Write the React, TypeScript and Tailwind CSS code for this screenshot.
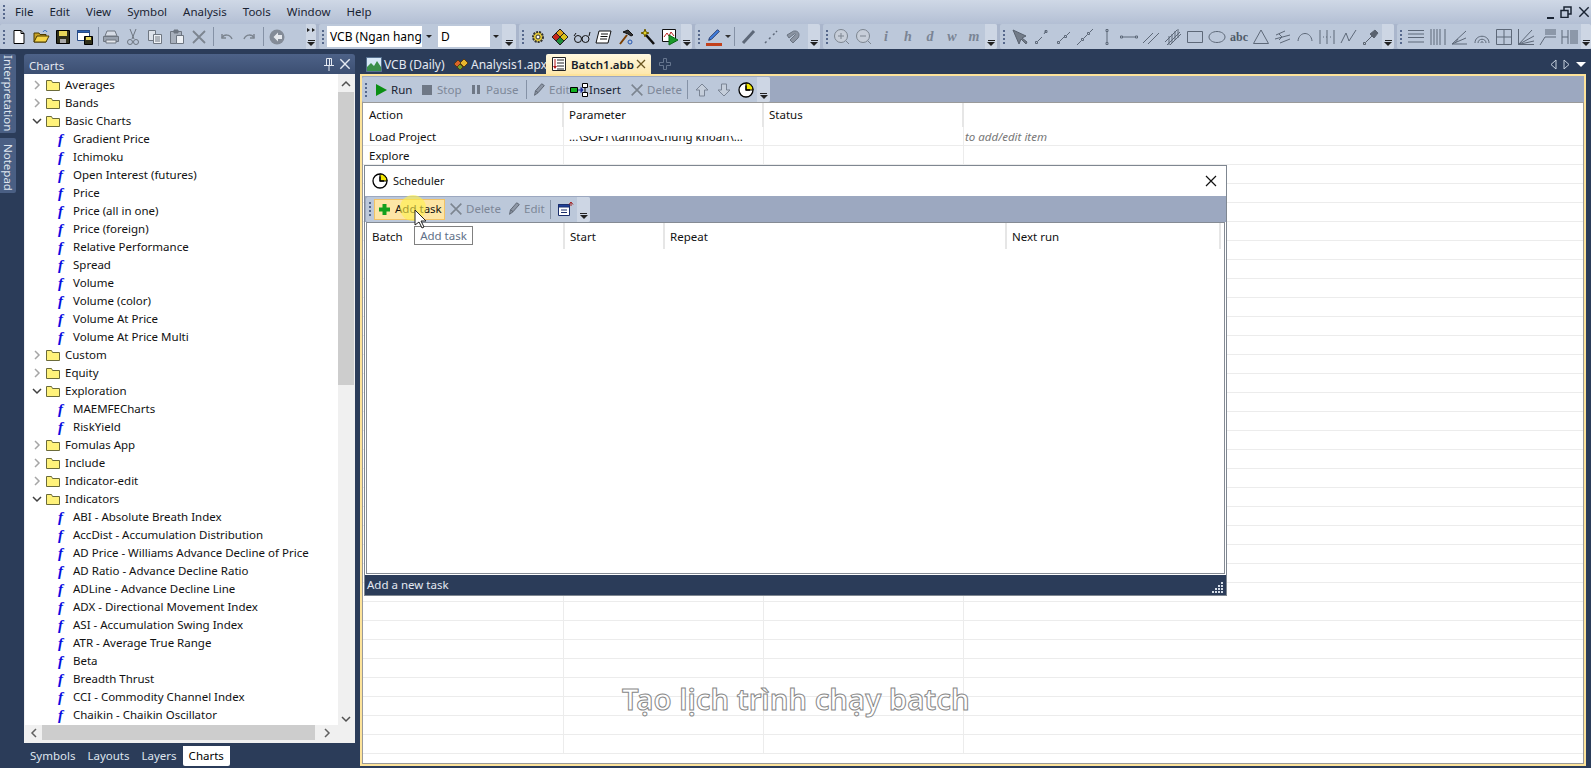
import { FC, ReactNode } from 'react';

const Svg: FC<{ children: ReactNode; size?: number; stroke?: string }> = ({ children, size = 18, stroke = '#5d6878' }) => (
  <svg width={size} height={size} viewBox="0 0 18 18" fill="none" stroke={stroke} strokeWidth="1">
    {children}
  </svg>
);

const Grip = () => (
  <div className="flex w-[8px] shrink-0 flex-col items-center gap-[2px]">
    {[0, 1, 2, 3].map(i => (
      <div key={i} className="h-[2px] w-[2px] bg-[#56688c]" />
    ))}
  </div>
);

const More = ({ w = 14, double }: { w?: number; double?: boolean }) => (
  <div className="flex h-full shrink-0 flex-col items-center bg-[#cdd6e4] pb-[3px]" style={{ width: w }}>
    {double && (
      <div className="mt-[4px] flex gap-[2px]">
        <div className="h-0 w-0 border-y-[2px] border-l-[3px] border-y-transparent border-l-[#222]" />
        <div className="h-0 w-0 border-y-[2px] border-l-[3px] border-y-transparent border-l-[#222]" />
      </div>
    )}
    <div className="flex-1" />
    <div className="mb-[1px] h-px w-[7px] bg-[#222]" />
    <div className="h-0 w-0 border-x-[4px] border-t-[4px] border-x-transparent border-t-[#222]" />
  </div>
);

const Slot: FC<{ children?: ReactNode }> = ({ children }) => (
  <div className="flex h-full w-[22px] shrink-0 items-center justify-center">{children}</div>
);

const Sep = ({ w = 4 }: { w?: number }) => (
  <div className="flex h-full shrink-0 items-center justify-center" style={{ width: w }}>
    <div className="h-[19px] w-px bg-[#8592a6]" />
  </div>
);

const Band: FC<{ w: number; children: ReactNode }> = ({ w, children }) => (
  <div className="flex h-[25px] shrink-0 items-center overflow-hidden rounded-[2px] bg-[#bcc8da]" style={{ width: w }}>
    {children}
  </div>
);

const Fill = () => <div className="min-w-0 flex-1" />;

/* colored toolbar icons */
const IconNew = () => (
  <Svg stroke="#000"><path d="M4 2.5h7l3 3v10H4z" fill="#fff" /><path d="M11 2.5v3h3" /></Svg>
);
const IconOpen = () => (
  <Svg stroke="#4a3a00"><path d="M2 14V5h5l1 1.500h6V14z" fill="#c9a227" /><path d="M2 14l3-6h12l-3 6z" fill="#f5d547" /><path d="M11 4c1-2 3-2 4 0" stroke="#1a5fb4" /></Svg>
);
const IconSave = () => (
  <Svg stroke="#000"><path d="M2.500 2.500h13v13h-13z" fill="#2f2f1a" /><path d="M5 3h8v5H5z" fill="#e7d65a" stroke="none" /><path d="M6 11h6v4H6z" fill="#a9a9a9" stroke="none" /></Svg>
);
const IconSaveAs = () => (
  <Svg stroke="#274b86"><path d="M1.500 2.500h12v10h-12z" fill="#fff" /><path d="M1.500 2.500h12v2h-12z" fill="#2e62b0" /><path d="M8.500 8.500h8v8h-8z" fill="#2f2f1a" stroke="#000" /><path d="M10 9h5v3h-5z" fill="#e7d65a" stroke="none" /></Svg>
);
const IconPrint = () => (
  <Svg stroke="#6e7681"><path d="M5 3h8l2 5H3z" fill="#d6dce6" /><path d="M1.500 8.500h15v5h-15z" fill="#98a1ae" /><path d="M4 12h10v3H4z" fill="#e4e7ec" /></Svg>
);
const IconCut = () => (
  <Svg stroke="#6e7681"><path d="M6 1l4 10M12 1L8 11" /><circle cx="6" cy="14" r="2.500" /><circle cx="12" cy="14" r="2.500" /></Svg>
);
const IconCopy = () => (
  <Svg stroke="#6e7681"><path d="M2.500 2.500h7v10h-7z" fill="#dde2ea" /><path d="M7.500 6.500h8v9h-8z" fill="#eef1f5" /><path d="M9 9h5M9 11h5M9 13h5" /></Svg>
);
const IconPaste = () => (
  <Svg stroke="#6e7681"><path d="M2.500 3.500h11v12h-11z" fill="#a8b0bc" /><path d="M6 2h4v3H6z" fill="#6e7681" /><path d="M8.500 7.500h7v8h-7z" fill="#eef1f5" /></Svg>
);
const IconX = ({ stroke = '#7c8590', size = 18 }: { stroke?: string; size?: number }) => (
  <Svg stroke={stroke} size={size}><path d="M3 3l12 12M15 3L3 15" strokeWidth="1.800" /></Svg>
);
const IconUndo = () => (
  <Svg stroke="#7c8590"><path d="M4 6v4h4" strokeWidth="1.500" /><path d="M4 10c2-4 8-4 10 1" strokeWidth="1.500" /></Svg>
);
const IconRedo = () => (
  <Svg stroke="#7c8590"><path d="M14 6v4h-4" strokeWidth="1.500" /><path d="M14 10c-2-4-8-4-10 1" strokeWidth="1.500" /></Svg>
);
const IconBack = () => (
  <Svg stroke="none"><circle cx="9" cy="9" r="7.500" fill="#838b97" /><path d="M10 4.500L5.500 9l4.500 4.500V11h4V7h-4z" fill="#e6e9ee" /></Svg>
);
const IconGear = () => (
  <Svg stroke="#333"><circle cx="9" cy="9" r="5" fill="#e3c93a" strokeDasharray="2 1" strokeWidth="2" /><circle cx="9" cy="9" r="2" fill="#fff" /></Svg>
);
const IconDiamonds = () => (
  <Svg stroke="#222">
    <path d="M5 5l4-4 4 4-4 4z" fill="#e2a317" /><path d="M1 9l4-4 4 4-4 4z" fill="#c2261c" /><path d="M9 9l4-4 4 4-4 4z" fill="#d9c21b" /><path d="M5 13l4-4 4 4-4 4z" fill="#1f8a3a" />
  </Svg>
);
const IconGlasses = () => (
  <Svg stroke="#111"><circle cx="5" cy="11" r="3.500" /><circle cx="12.500" cy="11" r="3.500" /><path d="M8.500 10h.5M1 8l2-3M16 8l1-4" /></Svg>
);
const IconBook = () => (
  <Svg stroke="#111"><path d="M4 3h12l-3 12H1z" fill="#fff" /><path d="M6 6h7M5.500 8.500h7M5 11h7" /></Svg>
);
const IconHammer = () => (
  <Svg stroke="#111"><path d="M3 16L10 7" strokeWidth="2" stroke="#7b3f00" /><path d="M6 4l5-2 5 5-2 1-3-2z" fill="#333" /><circle cx="13" cy="14" r="2" stroke="#2456b0" /></Svg>
);
const IconWand = () => (
  <Svg stroke="#111"><path d="M7 7l8 9" strokeWidth="2.500" /><path d="M6 1l1 3 3 1-3 1-1 3-1-3-3-1 3-1z" fill="#e3d32a" stroke="#6a5a00" /></Svg>
);
const IconRunChart = () => (
  <Svg stroke="#111"><path d="M1.500 1.500h13v12h-13z" fill="#fff" /><path d="M3 9l3-4 2 3 2-4 3 4" stroke="#b22" /><path d="M8 7l9 5-9 5z" fill="#1a9a2a" stroke="#0c6a18" /></Svg>
);
const IconPen = () => (
  <div className="flex flex-col items-center">
    <Svg size={16} stroke="#1c2f63"><path d="M4 12l9-9 2 2-9 9-3 1z" fill="#3f7fe0" /></Svg>
    <div className="h-[3px] w-[16px] bg-[#c2411c]" />
  </div>
);

const Tool: FC<{ d: string; sw?: number }> = ({ d, sw = 1 }) => (
  <Svg stroke="#5d6878"><path d={d} strokeWidth={sw} /></Svg>
);

const drawTools = [
  'M3.500 13.500h2v2h-2zM6 13l4-4M12 6l2-3M13 2.500h2v2h-2z',
  'M3.500 13.500h2v2h-2zM6 13l4-4M10.500 7.500h2v2h-2zM13 7l3-3',
  'M1 17l4-4M5.500 10.500h2v2h-2zM8 10l3-3M11.500 4.500h2v2h-2zM14 4l3-3',
  'M8 1.500h2v2H8zM9 3.500v11M8 14.500h2v2H8z',
  'M0.500 8h2v2h-2zM2.500 9h13M15.500 8h2v2h-2z',
  'M1 15L11 5M6 16L17 5',
  'M1 14L13 2M3 17L16 4M6 17l11-11M5 8v9M8 6v9M11 3v9M14 1v9',
  'M1.500 3.500h15v11h-15z',
  'M9 3.500c4.500 0 8 2.500 8 5.500s-3.500 5.500-8 5.500S1 12 1 9s3.500-5.500 8-5.500z',
];
const drawTools2 = [
  'M9 2L1.500 15.500h15z',
  'M2 7l9-4M1 11l15-4M6 15l10-4M5 6l3 3-3 3',
  'M2 13c1-10 13-10 14 0',
  'M2 2v14M16 2v14M5 9h1M8 9h1M12 9h1M9 2v14',
  'M1 15L6 5l3 8 7-11',
];
const fanTools = [
  'M1 2.500h16M1 6h16M1 9.500h16M1 14h16',
  'M2 1v16M5 1v16M8 1v16M11 1v16M16 1v16',
  'M1 16L15 3M1 16l14-6M1 16h15M4 15l3-4',
  'M2 15c0-9 14-9 14 0M5 15c0-5 8-5 8 0M8 15c0-2 2-2 2 0',
  'M1.500 1.500h15v15h-15zM1.500 9h15M9 1.500v15',
  'M1.500 1v15.500H17M1.500 16.500L15 2M1.500 16.500L17 8M1.500 16.500L17 13',
  'M1 17l5-8h11M6 2h11M6 4h11M6 6h11',
  'M1 2v14M7 2v14M1 9h6M10 2v14M12 2v14M14 2v14M16 2v14',
];

const ScaledLetter: FC<{ c: string }> = ({ c }) => (
  <span className="font-['Liberation_Serif',serif] text-[14px] font-bold italic text-[#7a8494]">{c}</span>
);

const ToolBar = () => (
  <div className="flex h-[25px] items-center gap-[3px] bg-[#aab6cc]">
    <Band w={316}>
      <Grip />
      <Slot><IconNew /></Slot><Slot><IconOpen /></Slot><Slot><IconSave /></Slot><Slot><IconSaveAs /></Slot>
      <Sep />
      <Slot><IconPrint /></Slot><Slot><IconCut /></Slot><Slot><IconCopy /></Slot><Slot><IconPaste /></Slot><Slot><IconX /></Slot>
      <Sep w={6} />
      <Slot><IconUndo /></Slot><Slot><IconRedo /></Slot>
      <Sep w={6} />
      <Slot><IconBack /></Slot>
      <Fill />
      <More w={10} double />
    </Band>
    <Band w={197}>
      <Grip />
      <div className="flex h-[21px] w-[109px] shrink-0 items-center bg-white pl-[3px] text-[12px] text-black">
        <span className="flex-1 whitespace-nowrap">VCB (Ngan hang</span>
        <div className="flex h-full w-[14px] shrink-0 items-center justify-center bg-[#bcc8da]">
          <div className="h-0 w-0 border-x-[3px] border-t-[3px] border-x-transparent border-t-[#222]" />
        </div>
      </div>
      <div className="ml-[2px] flex h-[21px] w-[64px] shrink-0 items-center bg-white pl-[3px] text-[12px] text-black">
        <span className="flex-1">D</span>
        <div className="flex h-full w-[12px] shrink-0 items-center justify-center bg-[#bcc8da]">
          <div className="h-0 w-0 border-x-[3px] border-t-[3px] border-x-transparent border-t-[#222]" />
        </div>
      </div>
      <Fill />
      <More />
    </Band>
    <Band w={173}>
      <Grip />
      <Slot><IconGear /></Slot><Slot><IconDiamonds /></Slot><Slot><IconGlasses /></Slot><Slot><IconBook /></Slot><Slot><IconHammer /></Slot><Slot><IconWand /></Slot><Slot><IconRunChart /></Slot>
      <Fill />
      <More w={11} />
    </Band>
    <Band w={125}>
      <Grip />
      <Slot><IconPen /></Slot>
      <div className="h-0 w-0 shrink-0 border-x-[3px] border-t-[3px] border-x-transparent border-t-[#333]" />
      <Sep w={7} />
      <Slot><Tool d="M3 15L14 3" sw={3} /></Slot>
      <Slot><Tool d="M3 15l1.500-1.500M7 11l1.500-1.500M11 7l1.500-1.500M14 4l1-1" sw={1.500} /></Slot>
      <Slot><Svg stroke="#6a7482"><path d="M11 3c4 0 5 4 3 7l-5 5-3-3 5-5c1-1 0-2-1-1l-5 4-2-3 5-3c1-1 2-1 3-1z" fill="#8b94a2" /></Svg></Slot>
      <Fill />
      <More w={12} />
    </Band>
    <Band w={174}>
      <Grip />
      <Slot><Svg stroke="#7c8590"><circle cx="8" cy="8" r="6.500" fill="#c7ced9" /><path d="M5 8h6M8 5v6M13 13l3 3" /></Svg></Slot>
      <Slot><Svg stroke="#7c8590"><circle cx="8" cy="8" r="6.500" fill="#c7ced9" /><path d="M5 8h6M13 13l3 3" /></Svg></Slot>
      <Slot><ScaledLetter c="i" /></Slot><Slot><ScaledLetter c="h" /></Slot><Slot><ScaledLetter c="d" /></Slot><Slot><ScaledLetter c="w" /></Slot><Slot><ScaledLetter c="m" /></Slot>
      <Fill />
      <More w={12} />
    </Band>
    <Band w={394}>
      <Grip />
      <Slot><Svg stroke="#59626f"><path d="M3 2l6 14 2-5 5 5 1-2-5-4 4-2z" fill="#737c89" /></Svg></Slot>
      {drawTools.map(d => <Slot key={d}><Tool d={d} /></Slot>)}
      <Slot><span className="font-['Liberation_Serif',serif] text-[12px] font-bold leading-none text-[#4f5a68]">abc</span></Slot>
      {drawTools2.map(d => <Slot key={d}><Tool d={d} /></Slot>)}
      <Slot><Svg stroke="#59626f"><path d="M1.500 14.500h2v2h-2zM4 14l6-6" /><path d="M8 6l5-4 3 3-4 5z" fill="#59626f" /></Svg></Slot>
      <Fill />
      <More w={12} />
    </Band>
    <Band w={194}>
      <Grip />
      {fanTools.map(d => <Slot key={d}><Tool d={d} /></Slot>)}
      <More w={10} />
    </Band>
  </div>
);

const MenuBar = () => (
  <div className="flex h-[24px] items-center bg-gradient-to-b from-[#cfd8e6] to-[#b3bfd4] text-[11.500px] text-[#1a2433]">
    <div className="w-[15px]"><Grip /></div>
    {['File', 'Edit', 'View', 'Symbol', 'Analysis', 'Tools', 'Window', 'Help'].map(m => (
      <span key={m} className="pr-[16px]">{m}</span>
    ))}
    <div className="ml-auto flex items-center gap-[5px] text-[#1a2433]">
      <div className="flex h-[14px] w-[8px] items-end"><div className="h-[2px] w-[7px] bg-[#1a2433]" /></div>
      <svg width="12" height="12" viewBox="0 0 12 12" fill="none" stroke="#1a2433" strokeWidth="1.500"><path d="M1 4.500h7v7H1zM4 4V1h7v7H8" /></svg>
      <IconX stroke="#1a2433" size={14} />
    </div>
  </div>
);

const tree: [number, string][] = [
  [1, 'Averages'], [1, 'Bands'], [2, 'Basic Charts'], [0, 'Gradient Price'], [0, 'Ichimoku'], [0, 'Open Interest (futures)'],
  [0, 'Price'], [0, 'Price (all in one)'], [0, 'Price (foreign)'], [0, 'Relative Performance'], [0, 'Spread'], [0, 'Volume'],
  [0, 'Volume (color)'], [0, 'Volume At Price'], [0, 'Volume At Price Multi'], [1, 'Custom'], [1, 'Equity'], [2, 'Exploration'],
  [0, 'MAEMFECharts'], [0, 'RiskYield'], [1, 'Fomulas App'], [1, 'Include'], [1, 'Indicator-edit'], [2, 'Indicators'],
  [0, 'ABI - Absolute Breath Index'], [0, 'AccDist - Accumulation Distribution'], [0, 'AD Price - Williams Advance Decline of Price'],
  [0, 'AD Ratio - Advance Decline Ratio'], [0, 'ADLine - Advance Decline Line'], [0, 'ADX - Directional Movement Index'],
  [0, 'ASI - Accumulation Swing Index'], [0, 'ATR - Average True Range'], [0, 'Beta'], [0, 'Breadth Thrust'],
  [0, 'CCI - Commodity Channel Index'], [0, 'Chaikin - Chaikin Oscillator'],
];

const TreeRow: FC<{ kind: number; label: string }> = ({ kind, label }) =>
  kind === 0 ? (
    <div className="flex h-[18px] items-center whitespace-nowrap">
      <span className="w-[48px] pl-[23px] text-center font-['Liberation_Serif',serif] text-[15px] font-bold italic leading-none text-[#0a0ae0]">f</span>
      <span>{label}</span>
    </div>
  ) : (
    <div className="flex h-[18px] items-center whitespace-nowrap">
      <div className="flex w-[17px] shrink-0 justify-end">
        <svg width="10" height="10" viewBox="0 0 10 10" fill="none" strokeWidth="1.500" stroke={kind === 1 ? '#a6a6a6' : '#404040'}>
          <path d={kind === 1 ? 'M3 1l4 4-4 4' : 'M1 3l4 4 4-4'} />
        </svg>
      </div>
      <svg width="16" height="14" viewBox="0 0 16 14" className="ml-[3px] shrink-0" stroke="#6b6b3a" strokeWidth="1">
        <path d="M1.500 12.500V2.500h5l1 2h7v8z" fill="#fff27a" />
      </svg>
      <span className="ml-[4px]">{label}</span>
    </div>
  );

const ChartsPanel = () => (
  <div className="flex w-[331px] shrink-0 flex-col">
    <div className="flex h-[689px] flex-col">
      <div className="flex h-[20px] shrink-0 items-center rounded-t-[3px] bg-gradient-to-b from-[#4d6288] to-[#3c4f72] pl-[5px] pr-[3px] text-[11.500px] text-[#e4e9f2]">
        <span className="flex-1 pt-[3px]">Charts</span>
        <svg width="12" height="14" viewBox="0 0 12 14" fill="none" stroke="#e4e9f2"><path d="M3.500 1.500h5v7h-5zM1 8.500h10M6 9v5" /><path d="M6.500 2v6" /></svg>
        <div className="ml-[3px]"><IconX stroke="#e4e9f2" size={14} /></div>
      </div>
      <div className="flex min-h-0 flex-1 border-x border-b-2 border-[#f0f0f0] bg-[#f0f0f0]">
        <div className="flex min-w-0 flex-1 flex-col">
          <div className="h-[651px] overflow-hidden bg-white pt-[2px] text-[11.500px] text-[#111]">
            {tree.map(([k, l]) => <TreeRow key={l} kind={k} label={l} />)}
          </div>
          <div className="flex h-[15px] items-center bg-[#f0f0f0]">
            <div className="flex w-[17px] justify-center"><svg width="8" height="10" viewBox="0 0 8 10" fill="none" stroke="#606060" strokeWidth="1.500"><path d="M6 1L2 5l4 4" /></svg></div>
            <div className="h-full w-[273px] bg-[#cdcdcd]" />
            <div className="flex flex-1 justify-center"><svg width="8" height="10" viewBox="0 0 8 10" fill="none" stroke="#606060" strokeWidth="1.500"><path d="M2 1l4 4-4 4" /></svg></div>
          </div>
        </div>
        <div className="flex w-[16px] shrink-0 flex-col items-center bg-[#f0f0f0] pt-[6px]">
          <svg width="10" height="8" viewBox="0 0 10 8" fill="none" stroke="#505050" strokeWidth="1.500"><path d="M1 6l4-4 4 4" /></svg>
          <div className="mt-[4px] h-[293px] w-full bg-[#cdcdcd]" />
          <div className="flex-1" />
          <svg width="10" height="8" viewBox="0 0 10 8" fill="none" stroke="#505050" strokeWidth="1.500" className="mb-[18px]"><path d="M1 2l4 4 4-4" /></svg>
        </div>
      </div>
    </div>
    <div className="mt-[3px] flex h-[20px] text-[11.500px] text-[#dfe5ef]">
      <span className="px-[6px] leading-[20px]">Symbols</span>
      <span className="px-[6px] leading-[20px]">Layouts</span>
      <span className="px-[6px] leading-[20px]">Layers</span>
      <span className="rounded-b-[2px] bg-white px-[6px] leading-[20px] text-black">Charts</span>
    </div>
  </div>
);

const IconClock = ({ size = 16 }: { size?: number }) => (
  <svg width={size} height={size} viewBox="0 0 16 16" stroke="#000" strokeWidth="1.300">
    <circle cx="8" cy="8" r="7" fill="#fff" />
    <path d="M8 8V1a7 7 0 0 1 7 7z" fill="#f2e600" strokeWidth="1" />
    <path d="M8 3.500V8h4" fill="none" />
  </svg>
);

const Btn: FC<{ w: number; icon: ReactNode; label?: string; dim?: boolean }> = ({ w, icon, label, dim }) => (
  <div className={`flex h-full shrink-0 items-center ${dim ? 'text-[#7d8798]' : 'text-[#1a2433]'}`} style={{ width: w }}>
    <div className="flex w-[18px] shrink-0 justify-center">{icon}</div>
    {label && <span className="ml-[1px] whitespace-nowrap text-[11.500px]">{label}</span>}
  </div>
);

const IconPencil = () => (
  <Svg size={16} stroke="#59616e"><path d="M4 15l1-5 7-8 3 2-7 8z" fill="#8d96a5" /><path d="M5 10l3 2" /></Svg>
);
const IconStop = () => <div className="h-[10px] w-[10px] bg-[#6f7886]" />;
const IconPause = () => (
  <div className="flex gap-[2px]"><div className="h-[9px] w-[3px] bg-[#6f7886]" /><div className="h-[9px] w-[3px] bg-[#6f7886]" /></div>
);
const IconPlay = () => (
  <svg width="14" height="14" viewBox="0 0 14 14"><path d="M2 1l11 6-11 6z" fill="#0a8f14" /></svg>
);
const IconInsert = () => (
  <svg width="18" height="16" viewBox="0 0 18 16" fill="none" stroke="#000"><path d="M.5 5.500h7v5h-7z" fill="#12b01e" /><path d="M8 8h4" stroke="#1c2f9a" /><path d="M11 5.500L13 8l-2 2.500z" fill="#1c2f9a" stroke="#1c2f9a" /><path d="M12.500 1.500h5v4h-5zM12.500 10.500h5v4h-5z" fill="#fff" /><path d="M15 5.500v5" /></svg>
);
const IconArrow = ({ flip }: { flip?: boolean }) => (
  <svg width="14" height="14" viewBox="0 0 14 14" fill="#c5cedb" stroke="#7a8494" className={flip ? 'rotate-180' : ''}>
    <path d="M7 1l6 6H9.500v6h-5V7H1z" />
  </svg>
);

const docRows = Array.from({ length: 33 }, (_, i) => i);

const DocGrid = () => (
  <div className="flex-1 overflow-hidden border border-[#9a9a9a] bg-white text-[11.500px] text-[#111]">
    <div className="flex h-[24px] items-center">
      <div className="flex h-full w-[201px] items-center border-r-2 border-[#e6e6e6] pl-[6px]">Action</div>
      <div className="flex h-full w-[200px] items-center border-r-2 border-[#e6e6e6] pl-[5px]">Parameter</div>
      <div className="flex h-full w-[200px] items-center border-r-2 border-[#e6e6e6] pl-[5px]">Status</div>
    </div>
    {docRows.map(i => (
      <div key={i} className="flex h-[19px] border-b border-[#ececec]">
        <div className="flex w-[201px] items-center border-r border-[#ececec] pl-[6px] pt-[2px]">
          {i === 0 ? 'Load Project' : i === 1 ? 'Explore' : ''}
        </div>
        <div className="relative flex w-[200px] items-center overflow-hidden whitespace-nowrap border-r border-[#ececec] pl-[5px] pt-[2px]">
          {i === 0 && (
            <>
              <span>...\SOFT\tanhoa\Chung khoan\...</span>
              <div className="absolute inset-x-0 top-0 h-[9px] bg-white" />
            </>
          )}
        </div>
        <div className="w-[200px] border-r border-[#ececec]" />
        <div className="flex flex-1 items-center pl-[1px] pt-[2px] italic text-[#777]">{i === 0 ? 'to add/edit item' : ''}</div>
      </div>
    ))}
  </div>
);

const DocPane = () => (
  <div className="flex min-w-0 flex-1 flex-col pl-[5px] pr-[5px]">
    <div className="flex h-[20px] shrink-0 items-center text-[12px] text-[#e4e9f2]">
      <svg width="16" height="15" viewBox="0 0 16 15" className="ml-[6px]" stroke="#56708f"><path d="M.5.500h15v14H.5z" fill="#d7e8f7" /><path d="M1 10l4-4 3 3 3-5 4 6v4H1z" fill="#3a8f4a" stroke="none" /></svg>
      <span className="ml-[2px] w-[69px] whitespace-nowrap pt-[1px]">VCB (Daily)</span>
      <svg width="16" height="14" viewBox="0 0 16 14" stroke="#5a3a10"><path d="M1 7l4-4 4 4-4 4z" fill="#d9642a" /><path d="M7 6l4-4 4 4-4 4z" fill="#e8b62e" /><path d="M4 10l3-3 3 3-3 3z" fill="#6fa02e" /></svg>
      <span className="ml-[2px] w-[75px] whitespace-nowrap pt-[1px]">Analysis1.apx</span>
      <div className="flex h-[20px] w-[105px] shrink-0 items-center rounded-t-[2px] bg-gradient-to-b from-[#fff8e0] to-[#fde8ad] pl-[6px] text-[11.500px] font-semibold text-[#141c2c]">
        <svg width="14" height="14" viewBox="0 0 14 14" stroke="#222" className="shrink-0"><path d="M.5.500h13v13H.5z" fill="#fff" /><path d="M5 3h7M5 6h7M5 9h7M5 12h7" /><path d="M3 2v8" stroke="#b01515" /><path d="M1 9l2 3 2-3z" fill="#b01515" stroke="none" /></svg>
        <span className="ml-[5px] flex-1 whitespace-nowrap pt-[1px]">Batch1.abb</span>
        <svg width="10" height="10" viewBox="0 0 10 10" fill="none" stroke="#6a5520" strokeWidth="1.300" className="mr-[5px]"><path d="M1 1l8 8M9 1L1 9" /></svg>
      </div>
      <svg width="12" height="12" viewBox="0 0 12 12" className="ml-[8px]" fill="none" stroke="#66768f"><path d="M4.500.500h3v4h4v3h-4v4h-3v-4h-4v-3h4z" /></svg>
      <div className="ml-auto flex items-center gap-[6px]">
        <svg width="7" height="11" viewBox="0 0 7 11" fill="none" stroke="#c5cfdd"><path d="M6 1v9L1 5.500z" /></svg>
        <svg width="7" height="11" viewBox="0 0 7 11" fill="none" stroke="#c5cfdd"><path d="M1 1v9l5-4.500z" /></svg>
        <div className="h-0 w-0 border-x-[5px] border-t-[5px] border-x-transparent border-t-white" />
      </div>
    </div>
    <div className="flex min-h-0 flex-1 flex-col overflow-hidden border-x-2 border-t-2 border-b-2 border-[#fde39a]">
      <div className="flex h-[26px] shrink-0 items-center bg-[#9ca8c0] pt-[1px]">
        <div className="flex h-[25px] w-[408px] items-center overflow-hidden rounded-[2px] bg-[#bcc8da]">
          <div className="w-[10px]"><Grip /></div>
          <Btn w={46} icon={<IconPlay />} label="Run" />
          <Btn w={49} icon={<IconStop />} label="Stop" dim />
          <Btn w={55} icon={<IconPause />} label="Pause" dim />
          <Sep w={8} />
          <Btn w={40} icon={<IconPencil />} label="Edit" dim />
          <Btn w={58} icon={<IconInsert />} label="Insert" />
          <Btn w={55} icon={<IconX size={16} />} label="Delete" dim />
          <Sep w={8} />
          <Slot><IconArrow /></Slot>
          <Slot><IconArrow flip /></Slot>
          <Slot><IconClock /></Slot>
          <Fill />
          <More w={13} />
        </div>
      </div>
      <DocGrid />
    </div>
  </div>
);

const schedCols = [
  { label: 'Batch', w: 198 },
  { label: 'Start', w: 100 },
  { label: 'Repeat', w: 342 },
  { label: 'Next run', w: 214 },
];

const SchedulerDialog = () => (
  <div className="absolute left-[364px] top-[165px] flex h-[431px] w-[863px] flex-col border border-[#7f8791] bg-white text-[11.500px] text-[#111]">
    <div className="flex h-[30px] shrink-0 items-center pl-[7px] pr-[9px]">
      <IconClock />
      <span className="ml-[5px] flex-1 text-[11px]">Scheduler</span>
      <svg width="12" height="12" viewBox="0 0 12 12" fill="none" stroke="#111" strokeWidth="1.200"><path d="M1 1l10 10M11 1L1 11" /></svg>
    </div>
    <div className="flex h-[26px] shrink-0 items-center bg-[#9ca8c0] pl-[1px]">
      <div className="flex h-[25px] w-[224px] items-center overflow-hidden rounded-[2px] bg-[#bcc8da]">
        <div className="w-[8px]"><Grip /></div>
        <div className="flex h-[21px] w-[71px] shrink-0 items-center border border-[#f2c265] bg-[#fde5a6] text-[#111]">
          <div className="flex w-[18px] justify-center">
            <svg width="13" height="13" viewBox="0 0 13 13"><path d="M4.500 1h4v3.500H12v4H8.500V12h-4V8.500H1v-4h3.500z" fill="#12a01c" /></svg>
          </div>
          <span className="ml-[2px] whitespace-nowrap">Add task</span>
        </div>
        <div className="w-[2px] shrink-0" />
        <Btn w={58} icon={<IconX size={16} />} label="Delete" dim />
        <Btn w={40} icon={<IconPencil />} label="Edit" dim />
        <Sep w={10} />
        <Slot>
          <svg width="18" height="16" viewBox="0 0 18 16" stroke="#1a2e6c"><path d="M1.500 3.500h11v11h-11z" fill="#fff" /><path d="M1.500 3.500h11v2.500h-11z" fill="#1f3f9a" /><path d="M4 9h6M4 11.500h6" /><path d="M14 5V1.500M12 3.500l2-2.500 2 2.500" fill="none" stroke="#a02020" /></svg>
        </Slot>
        <Fill />
        <More w={13} />
      </div>
    </div>
    <div className="mx-px min-h-0 flex-1 border border-[#858b94] bg-white">
      <div className="flex h-[26px]">
        {schedCols.map(c => (
          <div key={c.label} className="flex items-center border-r-2 border-[#e6e6e6] pl-[5px] pt-[2px]" style={{ width: c.w }}>
            {c.label}
          </div>
        ))}
      </div>
    </div>
    <div className="mt-px flex h-[20px] shrink-0 items-center bg-[#2b3c59] pl-[2px] pr-[3px] text-[#e4e9f2]">
      <span className="flex-1">Add a new task</span>
      <div className="grid grid-cols-4 gap-px self-end pb-[2px]">
        {[0, 0, 0, 1, 0, 0, 1, 1, 0, 1, 1, 1, 1, 1, 1, 1].map((on, i) => (
          <div key={i} className={`h-[2px] w-[2px] ${on ? 'bg-[#d5dde8]' : ''}`} />
        ))}
      </div>
    </div>
  </div>
);

export default function App() {
  return (
    <div className="relative h-[768px] w-[1591px] overflow-hidden bg-[#2b3c59] font-['Noto_Sans',sans-serif]">
      <MenuBar />
      <ToolBar />
      <div className="flex h-[719px] pb-[2px] pt-[5px]">
        <div className="flex w-[24px] shrink-0 flex-col gap-[5px]">
          <div className="flex h-[79px] w-[16px] items-center justify-center rounded-r-[2px] bg-[#4a5f84] text-[11.500px] text-[#dfe5ef] [writing-mode:vertical-rl]">Interpretation</div>
          <div className="flex h-[55px] w-[16px] items-center justify-center rounded-r-[2px] bg-[#4a5f84] pt-[3px] text-[11.500px] text-[#dfe5ef] [writing-mode:vertical-rl]">Notepad</div>
        </div>
        <ChartsPanel />
        <DocPane />
      </div>

      <SchedulerDialog />

      {/* tooltip + recorded cursor highlight */}
      <div className="absolute left-[414px] top-[226px] flex h-[19px] w-[59px] items-center justify-center border border-[#808080] bg-white text-[11.500px] text-[#5f7088]">Add task</div>
      <div className="absolute left-[400px] top-[195px] h-[26px] w-[26px] rounded-full bg-[#fff04a]/60" />
      <svg width="14" height="20" viewBox="0 0 14 20" className="absolute left-[414px] top-[209px]">
        <path d="M1 1v15l4-3 3 6 2-1-3-6h5z" fill="#fff" stroke="#222" />
      </svg>

      <div className="absolute left-[622px] top-[678px] whitespace-nowrap text-[29.300px] font-semibold text-white [-webkit-text-stroke:1px_#888]">
        Tạo lịch trình chạy batch
      </div>
    </div>
  );
}
